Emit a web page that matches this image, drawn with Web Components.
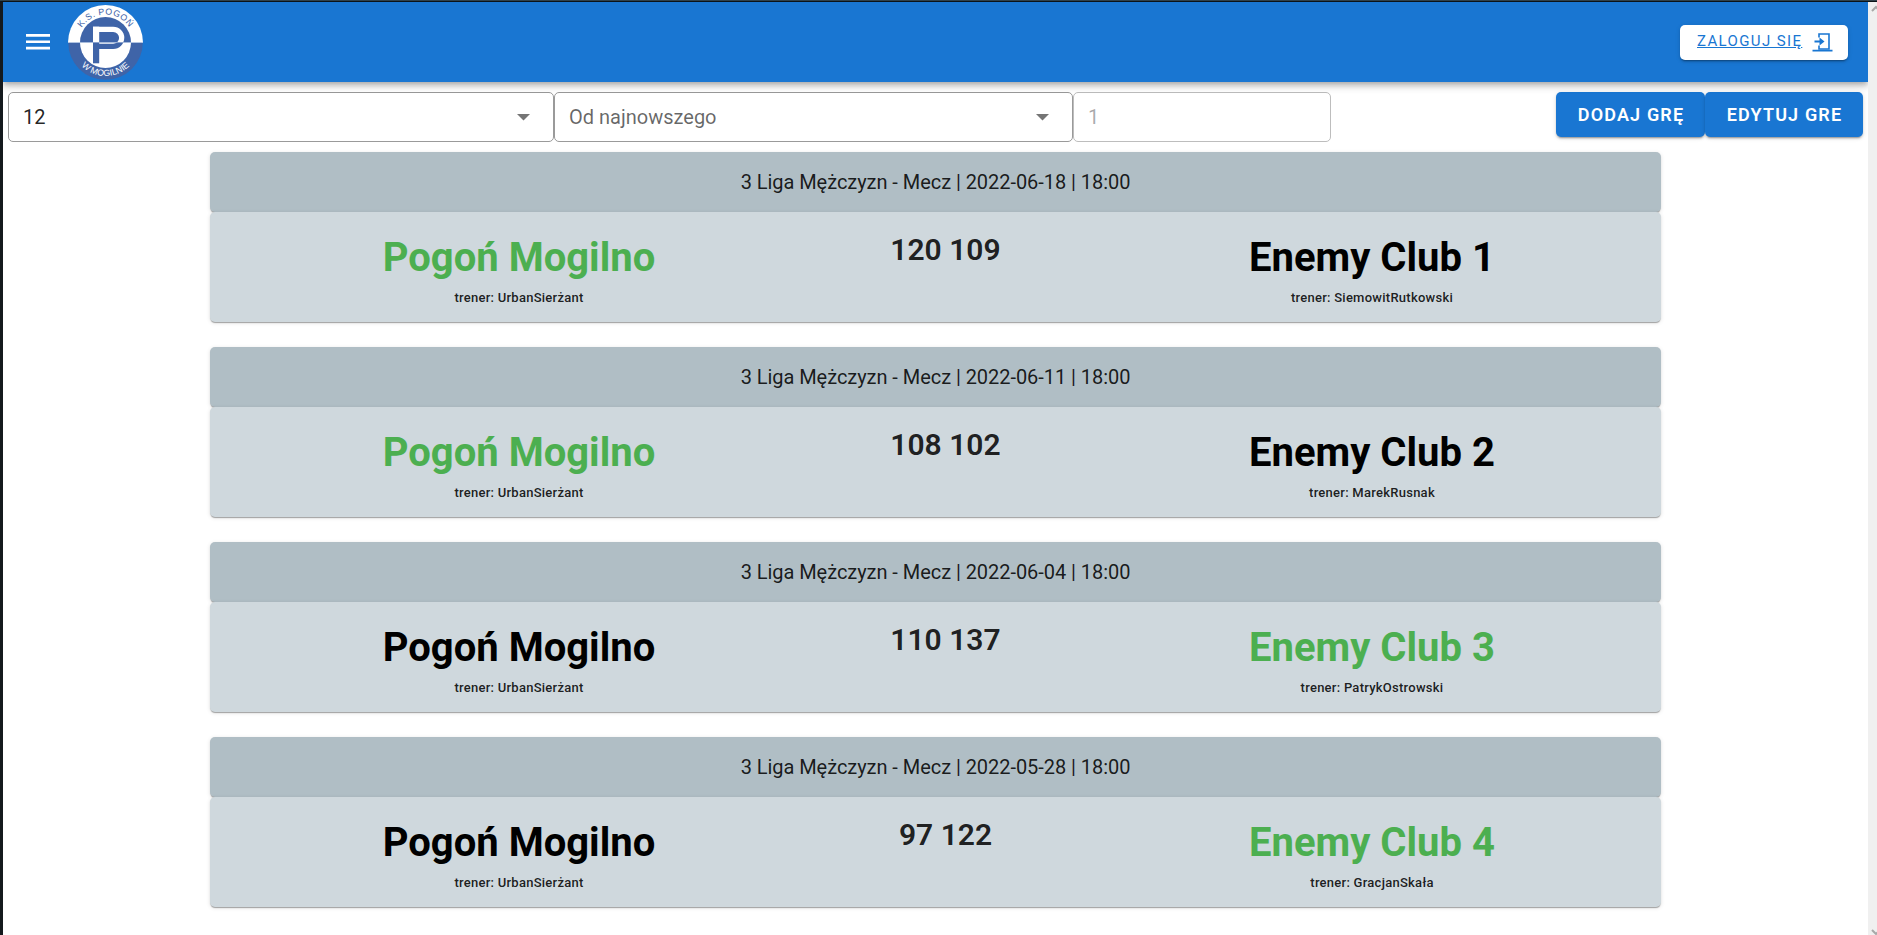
<!DOCTYPE html>
<html lang="pl">
<head>
<meta charset="utf-8">
<title>Mecze</title>
<style>
html,body{margin:0;height:100%;overflow:hidden}
body{font-family:Roboto,sans-serif;color:rgba(0,0,0,.87);background:#fff;border-top:1px solid #2f414b;box-sizing:border-box}
</style>
</head>
<body>
<club-app></club-app>
<script>
const define=(name,css,html)=>customElements.define(name,class extends HTMLElement{
  constructor(){
    super();
    const t=document.createElement('template');
    t.innerHTML=`<style>*{box-sizing:border-box}${css}</style>${html}`;
    this.attachShadow({mode:'open'}).append(t.content.cloneNode(true));
  }
});

define('club-logo',`:host{display:block;width:75px;height:75px}svg{display:block}`,`
<svg width="75" height="75" viewBox="0 0 75 75">
  <defs>
    <clipPath id="top"><rect width="75" height="37.5"/></clipPath>
    <clipPath id="bot"><rect y="37.5" width="75" height="37.5"/></clipPath>
    <path id="up" d="M9.5 37.5a28 28 0 0 1 56 0"/>
    <path id="down" d="M4 37.5a33.5 33.5 0 0 0 67 0"/>
  </defs>
  <g clip-path="url(#top)"><circle cx="37.5" cy="37.5" r="37.5" fill="#fff"/><circle cx="37.5" cy="37.5" r="25.5" fill="#3f64a8"/></g>
  <g clip-path="url(#bot)"><circle cx="37.5" cy="37.5" r="37.3" fill="#3f64a8"/><circle cx="37.5" cy="37.5" r="25.5" fill="#fff"/></g>
  <path d="M0 37.5h12M63 37.5h12" stroke="#c4d2e8" stroke-width=".8"/>
  <g fill="none" stroke-width="5.2">
    <path clip-path="url(#top)" stroke="#fff" d="M25 24.3H45.2a8.5 8.5 0 0 1 0 17H31"/>
    <path clip-path="url(#bot)" stroke="#3f64a8" d="M25 24.3H45.2a8.5 8.5 0 0 1 0 17H31"/>
  </g>
  <path fill="#fff" d="M25 21.7h6.2v15.8H25z"/><path fill="#3f64a8" d="M25 37.5h6.2v20.8H25z"/>
  <g font-family="Liberation Sans" font-size="8.8" text-anchor="middle">
    <text fill="#3f64a8" letter-spacing=".5"><textPath href="#up" startOffset="50%">K.S. POGOŃ</textPath></text>
    <text fill="#fff"><textPath href="#down" startOffset="50%">W MOGILNIE</textPath></text>
  </g>
</svg>`);

define('login-button',`:host{display:block}
button{display:flex;align-items:center;width:168px;height:35px;padding:0 15px 0 17px;border:0;border-radius:5px;background:#fff;color:#1976d2;font:450 15px Roboto,sans-serif;letter-spacing:1.37px;justify-content:space-between;box-shadow:0 3px 1px -2px rgba(0,0,0,.2),0 2px 2px rgba(0,0,0,.14),0 1px 5px rgba(0,0,0,.12)}
span{text-decoration:underline;white-space:nowrap;padding-bottom:2px}svg{display:block}`,`
<button><span><slot></slot></span><svg width="21" height="21" viewBox="0 0 21 21"><path d="M7 5.5V2h10v15H7v-3.5" fill="none" stroke="currentColor" stroke-width="1.6"/><path d="M2.5 8.5h5V5.5l5 4-5 4v-3h-5zM.5 17.8h20v1.8H.5z" fill="currentColor"/></svg></button>`);

define('app-bar',`:host{display:flex;align-items:center;height:80px;padding:0 20px 0 23px;background:#1976d2;box-shadow:0 2px 5px -1px rgba(0,0,0,.2),0 5px 6px rgba(0,0,0,.14),0 1px 12px rgba(0,0,0,.12);position:relative}
.menu{width:24px;height:16px;margin-right:18px;display:block}login-button{margin-left:auto}`,`
<svg class="menu" viewBox="0 0 24 16"><path d="M0 0h24v2.7H0zM0 6.4h24v2.7H0zM0 12.8h24v2.7H0z" fill="#fff"/></svg>
<club-logo></club-logo><login-button>ZALOGUJ SIĘ</login-button>`);

define('select-box',`:host{display:flex;align-items:center;justify-content:space-between;height:50px;padding:0 23px 0 14px;border:1px solid #9a9a9a;border-radius:5px;font-size:20px;letter-spacing:0}
:host([muted]){color:rgba(0,0,0,.6)}:host([disabled]){color:rgba(0,0,0,.35);border-color:#bdbdbd}:host([disabled]) svg{display:none}svg{display:block}`,`
<slot></slot><svg width="13" height="7" viewBox="0 0 13 7"><path d="M0 0h13L6.5 6.5z" fill="#757575"/></svg>`);

define('action-button',`:host{display:block}
button{display:block;width:100%;height:45px;padding:0 0 0 1px;border:0;border-radius:5px;background:#1976d2;color:#fff;font:600 18px Roboto,sans-serif;letter-spacing:1.15px;box-shadow:0 3px 1px -2px rgba(0,0,0,.2),0 2px 2px rgba(0,0,0,.14),0 1px 5px rgba(0,0,0,.12)}`,`<button><slot></slot></button>`);

define('filter-bar',`:host{display:grid;grid-template-columns:546px 519px 258px 1fr 149px 158px;padding:10px 5px 10px 5px;align-items:start}
.gap{min-width:0}`,`
<select-box>12</select-box><select-box muted>Od najnowszego</select-box><select-box disabled>1</select-box><div class="gap"></div>
<action-button>DODAJ GRĘ</action-button><action-button>EDYTUJ GRE</action-button>`);

define('team-info',`:host{display:block;text-align:center;padding-top:23px}
.name{font-weight:700;font-size:40px;line-height:46px;color:#000;white-space:nowrap}
:host([winner]) .name{color:#4caf50}
.coach{font-weight:500;font-size:13px;line-height:20px;margin-top:7px;letter-spacing:.26px}`,`
<div class="name"><slot name="name"></slot></div><div class="coach"><slot></slot></div>`);

define('match-card',`:host{display:block;width:1451px;margin:0 auto 25px 207px}
.head,.body{border-radius:5px;box-shadow:0 2px 1px -1px rgba(0,0,0,.2),0 1px 1px rgba(0,0,0,.14),0 1px 4px rgba(0,0,0,.12);position:relative}
.head{height:60px;display:flex;align-items:center;justify-content:center;background:#b0bec5;font-size:20px;letter-spacing:-.05px}
.body{height:110px;display:grid;grid-template-columns:426px 427px 426px;padding-left:96px;background:#cfd8dd}
.score{padding-top:20px;text-align:center;font-size:30px;line-height:36px;font-weight:600}`,`
<div class="head"><slot name="title"></slot></div>
<div class="body"><slot name="home"></slot><div class="score"><slot name="score"></slot></div><slot name="away"></slot></div>`);

const matches=[
 ['2022-06-18','120 109','Enemy Club 1','SiemowitRutkowski',1],
 ['2022-06-11','108 102','Enemy Club 2','MarekRusnak',1],
 ['2022-06-04','110 137','Enemy Club 3','PatrykOstrowski',0],
 ['2022-05-28','97 122','Enemy Club 4','GracjanSkała',0]];
define('club-app',`:host{display:grid;grid-template-columns:1865px 9px;height:934px;border-left:3px solid #14191d;border-top:1px solid #0b1318;overflow:hidden;box-sizing:border-box}
.scroll{background:#f0f0f0;display:flex;flex-direction:column;justify-content:space-between;overflow:hidden}
.scroll svg{display:block}main{min-width:0;height:933px;overflow:hidden}`,`
<main><app-bar></app-bar><filter-bar></filter-bar>
${matches.map(([d,s,t,c,w])=>`<match-card><span slot="title">3 Liga Mężczyzn - Mecz | ${d} | 18:00</span>
<team-info slot="home" ${w?'winner':''}><span slot="name">Pogoń Mogilno</span>trener: UrbanSierżant</team-info>
<span slot="score">${s}</span>
<team-info slot="away" ${w?'':'winner'}><span slot="name">${t}</span>trener: ${c}</team-info></match-card>`).join('')}
</main><div class="scroll"><svg width="9" height="12" viewBox="0 0 9 12"><path d="M4 9l4-4 4 4" fill="none" stroke="#a8a8a8" stroke-width="2"/></svg><svg width="9" height="6" viewBox="0 0 9 6"><path d="M4 1l4 4 4-4" fill="none" stroke="#a8a8a8" stroke-width="2"/></svg></div>`);
</script>
</body>
</html>
